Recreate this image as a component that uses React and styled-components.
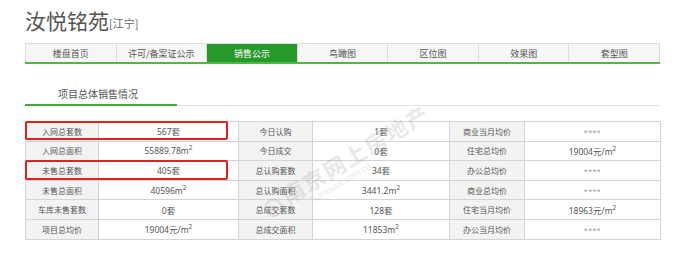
import React from 'react';
import styled, { createGlobalStyle } from 'styled-components';

const GlobalStyle = createGlobalStyle`
  body {
    margin: 0;
    background: #fff;
    font-family: "Noto Sans", "Noto Sans CJK SC", sans-serif;
    color: #555;
  }
`;

const Page = styled.div`
  width: 635px;
  padding: 8px 0 0 25px;
`;

const Title = styled.h1`
  margin: 0;
  height: 24px;
  display: flex;
  align-items: flex-end;
  font-family: "Noto Sans CJK SC", sans-serif;
  font-weight: 400;
  font-size: 21px;
  line-height: 24px;
  color: #555;
`;

const District = styled.span`
  font-size: 11px;
  line-height: 18px;
  color: #666;
`;

const Tabs = styled.div`
  display: flex;
  margin-top: 11px;
  border-top: 1px solid #ddd;
  border-bottom: 2px solid #55b449;
`;

const Tab = styled.div`
  flex: 1;
  height: 18px;
  display: flex;
  align-items: center;
  justify-content: center;
  font-size: 9px;
  font-family: "Noto Sans CJK SC", sans-serif;
  color: ${p => (p.$active ? '#fff' : '#555')};
  background: ${p => (p.$active ? '#25992a' : '#f6f6f6')};
  border-left: 1px solid #ddd;
  &:last-child {
    border-right: 1px solid #ddd;
  }
`;

const SectionHead = styled.div`
  margin-top: 20px;
  display: flex;
  border-bottom: 1px solid #e2e2e2;
`;

const SectionTitle = styled.div`
  width: 152px;
  padding-left: 33px;
  box-sizing: border-box;
  height: 22px;
  line-height: 20px;
  font-size: 10px;
  font-family: "Noto Sans CJK SC", sans-serif;
  color: #555;
  border-bottom: 2px solid #3db335;
  margin-bottom: -1px;
`;

const TableWrap = styled.div`
  position: relative;
  margin-top: 15px;
`;

const Table = styled.table`
  width: 635px;
  border-collapse: collapse;
  table-layout: fixed;
`;

const Cell = styled.td`
  height: 18.6px;
  padding: 0;
  border: 1px solid #d4d4d4;
  text-align: center;
  font-size: ${p => (p.$label ? '8px' : '8.5px')};
  font-family: "Noto Sans", "Noto Sans CJK SC", sans-serif;
  color: #555;
  background: ${p => (p.$label ? '#f3f3f3' : '#fff')};
  white-space: nowrap;
  sup {
    font-size: 6.5px;
    line-height: 0;
  }
`;

const Masked = styled.span`
  font-size: 7px;
  color: #999;
  letter-spacing: 0.5px;
`;

const Highlight = styled.div`
  position: absolute;
  left: 0;
  top: ${p => p.$top}px;
  width: 203px;
  height: ${p => p.$h}px;
  box-sizing: border-box;
  border: 2px solid #e3211f;
  border-radius: 2px;
  pointer-events: none;
`;

const Watermark = styled.div`
  position: absolute;
  left: 240px;
  top: 74px;
  transform: rotate(-31deg);
  transform-origin: left center;
  display: flex;
  align-items: center;
  gap: 4px;
  opacity: 0.14;
  pointer-events: none;
  color: #666;
`;

const WmText = styled.div`
  display: flex;
  flex-direction: column;
  align-items: flex-start;
`;

const WmBig = styled.span`
  font-family: "Noto Sans CJK SC", sans-serif;
  font-size: 22px;
  font-weight: 700;
  letter-spacing: 2px;
  line-height: 26px;
`;

const WmSmall = styled.span`
  font-family: "Liberation Sans", sans-serif;
  font-size: 9px;
  padding-left: 22px;
  line-height: 10px;
`;

const Logo = () => (
  <svg width="20" height="20" viewBox="0 0 20 20">
    <circle cx="10" cy="10" r="8" fill="none" stroke="#666" strokeWidth="2.5" />
    <path d="M6 12 L10 6 L14 12 Z" fill="#666" />
  </svg>
);

const tabs = ['楼盘首页', '许可/备案证公示', '销售公示', '鸟瞰图', '区位图', '效果图', '套型图'];

const M2 = () => <>m<sup>2</sup></>;
const Stars = () => <Masked>****</Masked>;

const rows = [
  ['入网总套数', '567套', '今日认购', '1套', '商业当月均价', <Stars />],
  ['入网总面积', <>55889.78<M2 /></>, '今日成交', '0套', '住宅总均价', <>19004元/<M2 /></>],
  ['未售总套数', '405套', '总认购套数', '34套', '办公总均价', <Stars />],
  ['未售总面积', <>40596<M2 /></>, '总认购面积', <>3441.2<M2 /></>, '商业总均价', <Stars />],
  ['车库未售套数', '0套', '总成交套数', '128套', '住宅当月均价', <>18963元/<M2 /></>],
  ['项目总均价', <>19004元/<M2 /></>, '总成交面积', <>11853<M2 /></>, '办公当月均价', <Stars />],
];

const widths = [73, 140, 74, 137, 75, 136];

export default function App() {
  return (
    <>
      <GlobalStyle />
      <Page>
        <Title>
          汝悦铭苑<District>[江宁]</District>
        </Title>
        <Tabs>
          {tabs.map(t => (
            <Tab key={t} $active={t === '销售公示'}>{t}</Tab>
          ))}
        </Tabs>
        <SectionHead>
          <SectionTitle>项目总体销售情况</SectionTitle>
        </SectionHead>
        <TableWrap>
          <Table>
            <colgroup>
              {widths.map((w, i) => <col key={i} style={{ width: w }} />)}
            </colgroup>
            <tbody>
              {rows.map((r, i) => (
                <tr key={i}>
                  {r.map((c, j) => (
                    <Cell key={j} $label={j % 2 === 0}>{c}</Cell>
                  ))}
                </tr>
              ))}
            </tbody>
          </Table>
          <Highlight $top={0} $h={19} />
          <Highlight $top={39} $h={20} />
          <Watermark>
            <Logo />
            <WmText>
              <WmBig>南京网上房地产</WmBig>
              <WmSmall>NJHouse.com.cn</WmSmall>
            </WmText>
          </Watermark>
        </TableWrap>
      </Page>
    </>
  );
}
